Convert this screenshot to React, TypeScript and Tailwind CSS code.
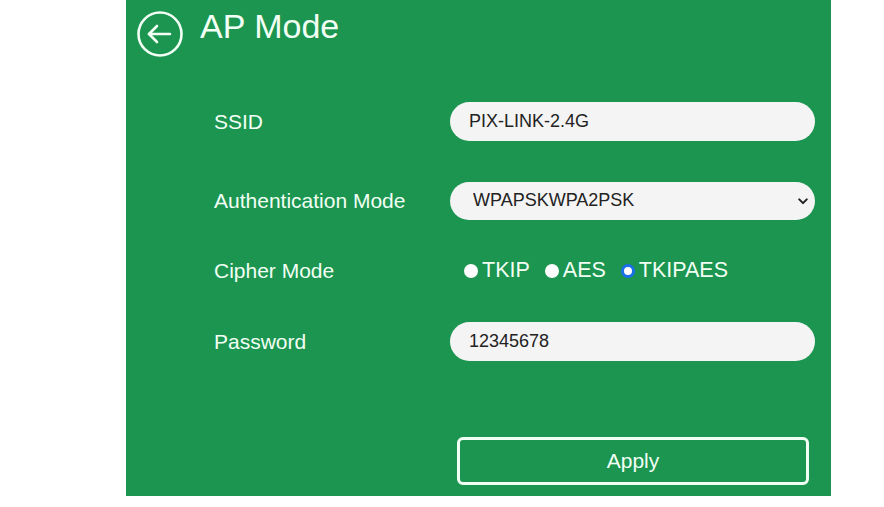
import { useState } from 'react'

const ciphers = ['TKIP', 'AES', 'TKIPAES']

export default function App() {
  const [ssid, setSsid] = useState('PIX-LINK-2.4G')
  const [auth, setAuth] = useState('WPAPSKWPA2PSK')
  const [cipher, setCipher] = useState('TKIPAES')
  const [password, setPassword] = useState('12345678')

  return (
    <div className="w-[884px] h-[507px] bg-white font-['Liberation_Sans',Arial,sans-serif]">
      <div className="ml-[126px] w-[705px] h-[496px] bg-[#1b9550] text-[#f2fff4] flex flex-col">
        {/* header */}
        <div className="flex items-start pt-[10px]">
          <button className="ml-[11px] mt-[1px] w-[46px] h-[46px] shrink-0">
            <svg viewBox="0 0 46 46" className="w-[46px] h-[46px]" fill="none" stroke="#f2fff4" strokeWidth={2.6} strokeLinecap="round" strokeLinejoin="round">
              <circle cx="23" cy="23" r="21.5" />
              <path d="M12 23h21" />
              <path d="M20 15l-8 8 8 8" />
            </svg>
          </button>
          <h1 className="ml-[17px] text-[34px] leading-[30px] mt-[1px]">AP Mode</h1>
        </div>

        {/* form */}
        <div className="grid grid-cols-[236px_365px] ml-[88px] mt-[45px] items-center">
          <div className="text-[21px] h-[39px] flex items-center">SSID</div>
          <input
            value={ssid}
            onChange={(e) => setSsid(e.target.value)}
            className="h-[39px] rounded-full bg-[#f4f4f4] text-[#222] text-[18px] pl-[19px] outline-none"
          />

          <div className="text-[21px] h-[39px] mt-[40px] flex items-center">Authentication Mode</div>
          <div className="relative mt-[40px] h-[38px]">
            <select
              value={auth}
              onChange={(e) => setAuth(e.target.value)}
              className="appearance-none w-full h-[38px] rounded-full bg-[#f4f4f4] text-[#222] text-[18px] pl-[23px] outline-none"
            >
              <option>WPAPSKWPA2PSK</option>
              <option>WPA2PSK</option>
              <option>WPAPSK</option>
            </select>
            <svg viewBox="0 0 12 8" className="absolute right-[7px] top-[16px] w-[10px] h-[7px] pointer-events-none" fill="none" stroke="#222" strokeWidth={2.4} strokeLinecap="round" strokeLinejoin="round">
              <path d="M1.5 1.5L6 6l4.5-4.5" />
            </svg>
          </div>

          <div className="text-[21px] h-[39px] mt-[31px] flex items-center">Cipher Mode</div>
          <div className="h-[39px] mt-[31px] flex items-center pl-[14px] text-[21.5px]">
            {ciphers.map((c) => (
              <label key={c} className="flex items-center mr-[15px] cursor-pointer" onClick={() => setCipher(c)}>
                {cipher === c ? (
                  <span className="w-[14px] h-[14px] shrink-0 rounded-full border-[3px] border-[#1a6fe8] bg-white mr-[4px]" />
                ) : (
                  <span className="w-[14px] h-[14px] shrink-0 rounded-full bg-white mr-[4px]" />
                )}
                {c}
              </label>
            ))}
          </div>

          <div className="text-[21px] h-[39px] mt-[32px] flex items-center">Password</div>
          <input
            value={password}
            onChange={(e) => setPassword(e.target.value)}
            className="h-[39px] mt-[32px] rounded-full bg-[#f4f4f4] text-[#222] text-[18px] pl-[19px] outline-none"
          />

          <div />
          <button className="mt-[76px] ml-[7px] w-[352px] h-[48px] border-[3px] border-[#f2fff4] rounded-[6px] text-[21px] text-[#f2fff4]">
            Apply
          </button>
        </div>
      </div>
    </div>
  )
}
